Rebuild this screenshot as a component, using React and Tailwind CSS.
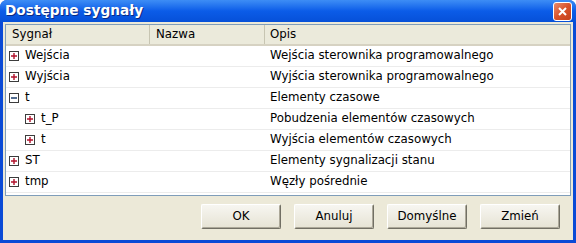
import React from 'react';

const rows = [
  { name: 'Wejścia', desc: 'Wejścia sterownika programowalnego', level: 0, open: false },
  { name: 'Wyjścia', desc: 'Wyjścia sterownika programowalnego', level: 0, open: false },
  { name: 't', desc: 'Elementy czasowe', level: 0, open: true },
  { name: 't_P', desc: 'Pobudzenia elementów czasowych', level: 1, open: false },
  { name: 't', desc: 'Wyjścia elementów czasowych', level: 1, open: false },
  { name: 'ST', desc: 'Elementy sygnalizacji stanu', level: 0, open: false },
  { name: 'tmp', desc: 'Węzły pośrednie', level: 0, open: false },
];

function Toggle({ open }) {
  return (
    <svg width="10" height="10" viewBox="0 0 10 10" className="shrink-0">
      <rect x="0.5" y="0.5" width="9" height="9" fill="#fff" stroke="#3c3c3c" />
      <line x1="2" y1="5" x2="8" y2="5" stroke={open ? '#1a3d6b' : '#b0102a'} strokeWidth="1.4" />
      {!open && <line x1="5" y1="2" x2="5" y2="8" stroke="#b0102a" strokeWidth="1.4" />}
    </svg>
  );
}

function Button({ children }) {
  return (
    <button className="w-[80px] h-[25px] rounded-[2px] border border-t-white border-l-white border-r-[#716f64] border-b-[#716f64] shadow-[inset_-1px_-1px_0_#aca899] bg-gradient-to-b from-[#f7f6f1] to-[#e6e3d4] text-[11.8px] text-black">
      {children}
    </button>
  );
}

export default function App() {
  return (
    <div className="w-[576px] h-[243px] flex flex-col bg-[#0a4ad6] rounded-t-[7px] overflow-hidden" style={{ fontFamily: '"DejaVu Sans", Tahoma, sans-serif' }}>
      {/* Title bar */}
      <div className="h-[22px] shrink-0 flex items-center justify-between pl-[5px] pr-[4px] bg-gradient-to-b from-[#3d8df5] via-[#0b5ce8] to-[#0650d8]">
        <span className="text-white font-bold text-[13.7px] leading-none [text-shadow:1px_1px_0_#0a2a82]">
          Dostępne sygnały
        </span>
        <div className="w-[19px] h-[19px] rounded-[3px] border border-white bg-gradient-to-br from-[#e88a6a] via-[#d9522a] to-[#c4401a] flex items-center justify-center">
          <svg width="9" height="9" viewBox="0 0 9 9">
            <path d="M1 1 L8 8 M8 1 L1 8" stroke="#fff" strokeWidth="2" />
          </svg>
        </div>
      </div>

      {/* Body */}
      <div className="flex-1 mx-[3px] mb-[3px] bg-[#ece9d8] flex flex-col px-[2px] pt-[2px]">
        <div className="h-[172px] shrink-0 bg-white border border-[#7f9db9] flex flex-col overflow-hidden">
          <div className="h-[21px] shrink-0 flex bg-[#ebeadb] border-b-2 border-[#d6d2c2] text-[11.8px] text-black">
            <div className="w-[144px] pl-[6px] flex items-center border-r border-[#c7c5b2]">Sygnał</div>
            <div className="w-[115px] pl-[6px] flex items-center border-r border-[#c7c5b2]">Nazwa</div>
            <div className="flex-1 pl-[5px] flex items-center">Opis</div>
          </div>
          {rows.map((r, i) => (
            <div key={i} className="h-[21px] shrink-0 flex items-center border-b border-[#ececec] text-[11.8px] text-black">
              <div className={`w-[144px] flex items-center gap-[6px] ${r.level ? 'pl-[19px]' : 'pl-[3px]'}`}>
                <Toggle open={r.open} />
                <span>{r.name}</span>
              </div>
              <div className="w-[115px]" />
              <div className="flex-1 pl-[5px]">{r.desc}</div>
            </div>
          ))}
        </div>

        <div className="flex-1 flex items-center justify-end gap-[13px] pr-[11px] pb-[3px]">
          <Button>OK</Button>
          <Button>Anuluj</Button>
          <Button>Domyślne</Button>
          <Button>Zmień</Button>
        </div>
      </div>
    </div>
  );
}
